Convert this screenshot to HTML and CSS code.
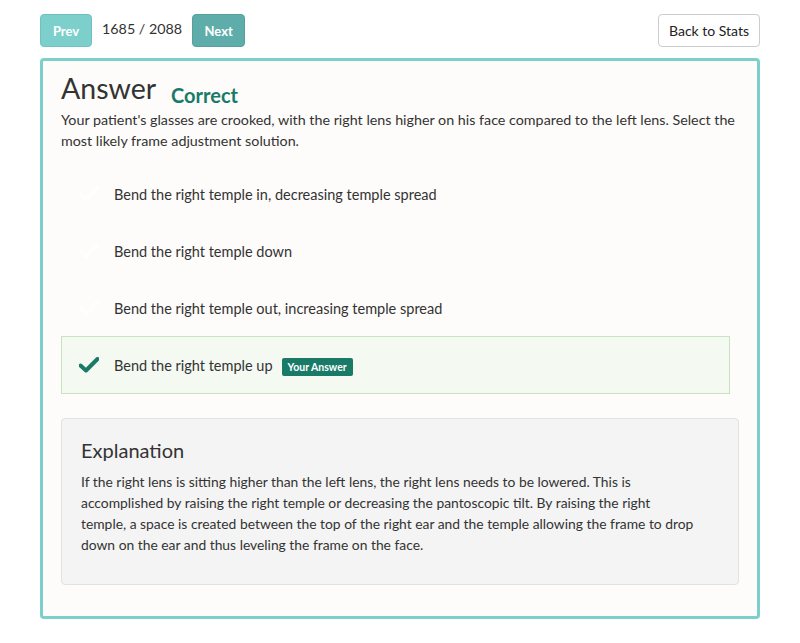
FILE: index.html
```html
<!DOCTYPE html>
<html>
<head>
<meta charset="utf-8">
<link rel="stylesheet" href="styles.css">
</head>
<body>
<div class="page">
  <div class="toolbar">
    <div class="pager">
      <button class="btn btn-prev">Prev</button>
      <span class="count">1685 / 2088</span>
      <button class="btn btn-next">Next</button>
    </div>
    <button class="btn-back">Back to Stats</button>
  </div>
  <div class="card">
    <div class="title-row">
      <h1 class="title">Answer</h1>
      <span class="status">Correct</span>
    </div>
    <p class="question">Your patient's glasses are crooked, with the right lens higher on his face compared to the left lens. Select the most likely frame adjustment solution.</p>
    <ul class="options">
      <li class="option">
        <svg class="check check-hidden" viewBox="0 0 20 16"><path d="M1.5 8.5 L7 13.5 L18.5 2" fill="none" stroke-width="4" stroke-linecap="round" stroke-linejoin="round"/></svg>
        <span>Bend the right temple in, decreasing temple spread</span>
      </li>
      <li class="option">
        <svg class="check check-hidden" viewBox="0 0 20 16"><path d="M1.5 8.5 L7 13.5 L18.5 2" fill="none" stroke-width="4" stroke-linecap="round" stroke-linejoin="round"/></svg>
        <span>Bend the right temple down</span>
      </li>
      <li class="option">
        <svg class="check check-hidden" viewBox="0 0 20 16"><path d="M1.5 8.5 L7 13.5 L18.5 2" fill="none" stroke-width="4" stroke-linecap="round" stroke-linejoin="round"/></svg>
        <span>Bend the right temple out, increasing temple spread</span>
      </li>
      <li class="option option-selected">
        <svg class="check check-correct" viewBox="0 0 20 16"><path d="M1.5 8.5 L7 13.5 L18.5 2" fill="none" stroke-width="4" stroke-linecap="round" stroke-linejoin="round"/></svg>
        <span>Bend the right temple up</span>
        <span class="badge">Your Answer</span>
      </li>
    </ul>
    <div class="explanation">
      <h2 class="exp-title">Explanation</h2>
      <p class="exp-text">If the right lens is sitting higher than the left lens, the right lens needs to be lowered. This is<br>accomplished by raising the right temple or decreasing the pantoscopic tilt. By raising the right<br>temple, a space is created between the top of the right ear and the temple allowing the frame to drop<br>down on the ear and thus leveling the frame on the face.</p>
    </div>
  </div>
</div>
</body>
</html>
```
FILE: styles.css
```css
* { box-sizing: border-box; }
html, body { margin: 0; padding: 0; background: #ffffff; }
body {
  font-family: Lato, "Open Sans", sans-serif;
  color: #333333;
}
.page {
  width: 720px;
  margin-left: 40px;
  padding-top: 14px;
}
.toolbar {
  display: flex;
  justify-content: space-between;
  align-items: center;
  height: 33px;
}
.pager {
  display: flex;
  align-items: center;
}
.btn {
  height: 33px;
  border: 1px solid transparent;
  border-radius: 4px;
  color: #ffffff;
  font-family: inherit;
  font-weight: 700;
  font-size: 13px;
  padding: 0;
  cursor: pointer;
}
.btn-prev {
  width: 52px;
  background: #7dcfcc;
  border-color: #6ec3c0;
}
.btn-next {
  width: 53px;
  background: #5fadaa;
  border-color: #56a19e;
}
.count {
  font-size: 14.3px;
  color: #333;
  margin: 0 10px;
  white-space: nowrap;
  position: relative;
  top: -2px;
}
.btn-back {
  height: 33px;
  width: 102px;
  background: #ffffff;
  border: 1px solid #cccccc;
  border-radius: 4px;
  font-family: inherit;
  font-size: 14px;
  color: #222;
  padding: 0;
}
.card {
  margin-top: 11px;
  border: 3px solid #7dcfcc;
  border-radius: 4px;
  background: #fdfcfa;
  padding: 7px 18px 31px 18px;
  height: 561px;
}
.title-row {
  display: flex;
  align-items: baseline;
  height: 41px;
}
.title {
  margin: 0;
  font-size: 28.5px;
  font-weight: 400;
  color: #333;
  line-height: 40px;
}
.status {
  margin-left: 15px;
  font-size: 20px;
  font-weight: 700;
  color: #1a7a68;
  position: relative;
  top: 4px;
}
.question {
  margin: 0;
  font-size: 14.3px;
  line-height: 21px;
  color: #333;
}
.options {
  list-style: none;
  margin: 14px 0 0 0;
  padding: 0;
}
.option {
  display: flex;
  align-items: center;
  height: 58px;
  margin-bottom: -1px;
  padding-left: 17px;
  font-size: 14.5px;
  color: #333;
  border: 1px solid transparent;
  width: 669px;
}
.check {
  width: 20px;
  height: 16px;
  margin-right: 15px;
  flex: none;
}
.check-hidden path { stroke: #fefefe; }
.check-correct path { stroke: #1a7a68; }
.option-selected {
  background: #f4f9f2;
  border-color: #c9e2c2;
  margin-top: -1px;
}
.badge {
  margin-left: 9px;
  background: #1a7a68;
  color: #ffffff;
  font-size: 10.5px;
  font-weight: 700;
  padding: 2px 6px;
  border-radius: 2px;
  line-height: 14px;
  position: relative;
  top: 2px;
}
.explanation {
  margin-top: 25px;
  width: 678px;
  background: #f4f4f4;
  border: 1px solid #e2e2e2;
  border-radius: 4px;
  padding: 18px 19px 29px 19px;
}
.exp-title {
  margin: 0 0 8px 0;
  font-size: 20px;
  font-weight: 400;
  color: #333;
  line-height: 26px;
}
.exp-text {
  margin: 0;
  font-size: 13.85px;
  line-height: 21px;
  color: #333;
  white-space: nowrap;
}
```
